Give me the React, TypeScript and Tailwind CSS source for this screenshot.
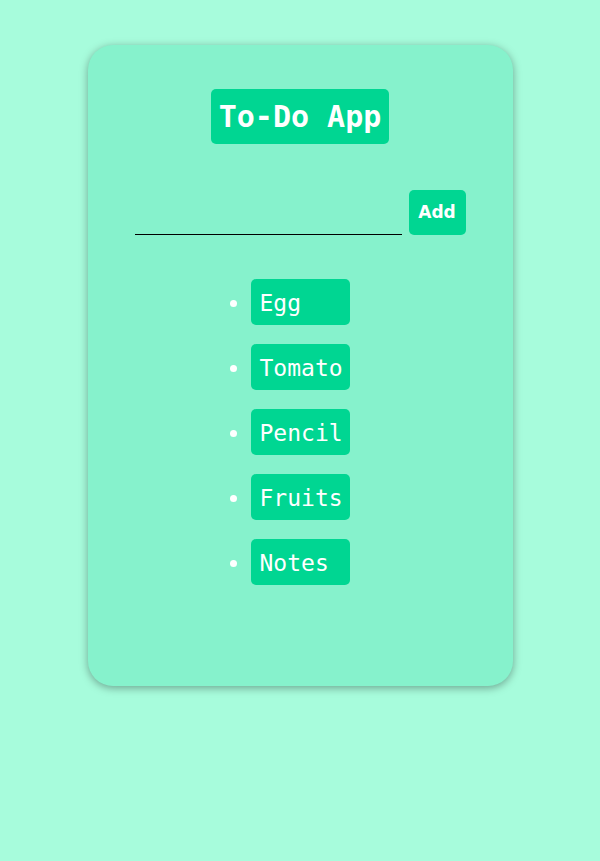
import { useState } from 'react';

export default function App() {
  const [items, setItems] = useState<string[]>(['Egg', 'Tomato', 'Pencil', 'Fruits', 'Notes']);
  const [text, setText] = useState('');

  const addItem = () => {
    if (!text.trim()) return;
    setItems([...items, text.trim()]);
    setText('');
  };

  return (
    <div className="min-h-[861px] w-full bg-[#a7fcdc] pt-[45px]">
      {/* Card */}
      <div className="mx-auto flex h-[641px] w-[425px] flex-col items-center rounded-[25px] bg-[#86f2cc] pt-[44px] shadow-[0_2px_8px_rgba(0,0,0,0.35)]">
        <h1 className="rounded-[5px] bg-[#00d692] px-[8px] py-[10px] font-['DejaVu_Sans_Mono',monospace] text-[30px] font-bold leading-[35px] text-white">
          To-Do App
        </h1>

        {/* Input row */}
        <div className="mt-[46px] flex items-end gap-[7px]">
          <input
            value={text}
            onChange={(e) => setText(e.target.value)}
            className="h-[30px] w-[267px] border-b border-black bg-transparent font-['DejaVu_Sans_Mono',monospace] text-[18px] outline-none"
          />
          <button
            onClick={addItem}
            className="h-[45px] w-[57px] rounded-[5px] bg-[#00d692] font-['DejaVu_Sans',sans-serif] text-[17px] font-black text-white"
          >
            Add
          </button>
        </div>

        {/* List */}
        <ul className="mt-[44px] flex flex-col items-center gap-[19px] font-['DejaVu_Sans_Mono',monospace] text-[23px] text-white">
          {items.map((item, i) => (
            <li key={i} className="list-item list-disc marker:text-white">
              <span className="block w-[99px] rounded-[5px] bg-[#00d692] px-[9px] pb-[9px] pt-[11px] leading-[26px]">
                {item}
              </span>
            </li>
          ))}
        </ul>
      </div>
    </div>
  );
}
